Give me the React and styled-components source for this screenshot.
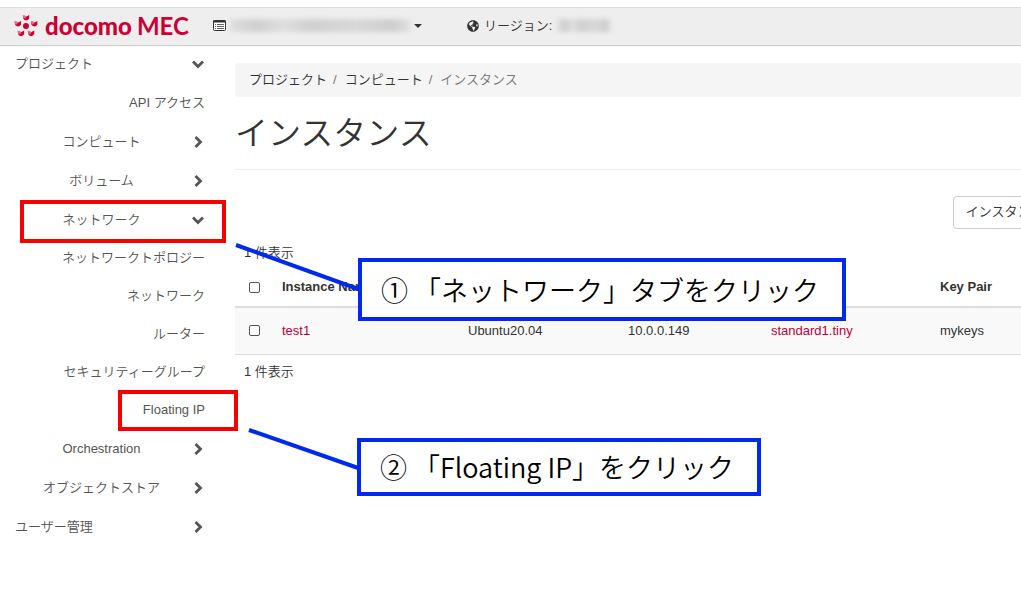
import React from 'react';
import styled, { createGlobalStyle } from 'styled-components';
import { FaGlobeAmericas } from 'react-icons/fa';

const menu = [
  { label: 'プロジェクト', kind: 'top', open: true },
  { label: 'API アクセス', kind: 'item', tall: true },
  { label: 'コンピュート', kind: 'group' },
  { label: 'ボリューム', kind: 'group' },
  { label: 'ネットワーク', kind: 'group', open: true, marked: true },
  { label: 'ネットワークトポロジー', kind: 'item' },
  { label: 'ネットワーク', kind: 'item' },
  { label: 'ルーター', kind: 'item' },
  { label: 'セキュリティーグループ', kind: 'item' },
  { label: 'Floating IP', kind: 'item', marked: true },
  { label: 'Orchestration', kind: 'group' },
  { label: 'オブジェクトストア', kind: 'group' },
  { label: 'ユーザー管理', kind: 'top' },
];

const instances = [
  {
    name: 'test1',
    image: 'Ubuntu20.04',
    ip: '10.0.0.149',
    flavor: 'standard1.tiny',
    keyPair: 'mykeys',
  },
];

const Chevron = ({ open }) => (
  <svg width="14" height="14" viewBox="0 0 14 14" aria-hidden="true">
    <path
      d={open ? 'M2 4.5 7 9.5 12 4.5' : 'M4.5 2 9.5 7 4.5 12'}
      fill="none"
      stroke="#555"
      strokeWidth="2.8"
    />
  </svg>
);

const LogoMark = () => (
  <svg width="24" height="24" viewBox="-12 -12 24 24" aria-hidden="true">
    <circle r="3" fill="#cc0033" />
    {[0, 72, 144, 216, 288].map((angle) => (
      <g
        key={angle}
        transform={`rotate(${angle}) translate(0 -8.6) rotate(${-angle})`}
      >
        <path d="M-3.2-2 0-.6 3.2-2.4V1.4Q1.8 3 0 3.2-2 2.8-2.8 1.2Z" fill="#cc0033" />
        <path d="M-3.2-2-1.4-2.2.2-.8-.6 1.2-2.6.8Z" fill="#e56a88" />
      </g>
    ))}
  </svg>
);

const ListIcon = () => (
  <svg width="13" height="11" viewBox="0 0 13 11" aria-hidden="true">
    <rect x=".5" y=".5" width="12" height="10" rx="1" fill="#fff" stroke="#333" />
    <path d="M0 1.5h13" stroke="#333" strokeWidth="2" />
    <path d="M2 4.5h1M2 6.5h1M2 8.5h1M4 4.5h7M4 6.5h7M4 8.5h7" stroke="#666" />
  </svg>
);

export default function App() {
  return (
    <>
      <GlobalStyle />
      <Header>
        <Brand href="#">
          <LogoMark />
          <Docomo>docomo</Docomo>
          <Mec>MEC</Mec>
        </Brand>
        <Picker type="button" aria-label="プロジェクト">
          <ListIcon />
          <Redacted $width={180} />
          <Caret />
        </Picker>
        <Region>
          <FaGlobeAmericas size={12} />
          リージョン:
          <Redacted $width={54} />
        </Region>
      </Header>
      <Page>
        <Sidebar>
          {menu.map((entry, index) =>
            entry.kind === 'item' ? (
              <MenuLink href="#" key={index} $tall={entry.tall}>
                {entry.label}
                {entry.marked && <LinkMark />}
              </MenuLink>
            ) : (
              <MenuButton
                type="button"
                key={index}
                aria-expanded={!!entry.open}
                $top={entry.kind === 'top'}
              >
                <span>{entry.label}</span>
                <Chevron open={entry.open} />
                {entry.marked && <GroupMark />}
              </MenuButton>
            )
          )}
        </Sidebar>
        <Main>
          <Breadcrumb>
            <a href="#">プロジェクト</a>
            <i>/</i>
            <a href="#">コンピュート</a>
            <i>/</i>
            <span>インスタンス</span>
          </Breadcrumb>
          <Title>インスタンス</Title>
          <Toolbar>
            <FilterButton type="button">インスタンス ID =</FilterButton>
          </Toolbar>
          <Count>1 件表示</Count>
          <Table>
            <colgroup>
              <Col $width={39} />
              <Col $width={186} />
              <Col $width={160} />
              <Col $width={143} />
              <Col $width={169} />
              <Col $width={200} />
            </colgroup>
            <thead>
              <tr>
                <Th>
                  <Check type="checkbox" aria-label="すべて選択" />
                </Th>
                <Th>Instance Name</Th>
                <Th aria-label="Image Name" />
                <Th aria-label="IP Address" />
                <Th aria-label="Flavor" />
                <Th>Key Pair</Th>
              </tr>
            </thead>
            <tbody>
              {instances.map((instance) => (
                <tr key={instance.name}>
                  <Td>
                    <Check type="checkbox" aria-label={instance.name} />
                  </Td>
                  <Td>
                    <CellLink href="#">{instance.name}</CellLink>
                  </Td>
                  <Td>{instance.image}</Td>
                  <Td>{instance.ip}</Td>
                  <Td>
                    <CellLink href="#">{instance.flavor}</CellLink>
                  </Td>
                  <Td>{instance.keyPair}</Td>
                </tr>
              ))}
            </tbody>
          </Table>
          <Count>1 件表示</Count>
        </Main>
      </Page>
      <Pointers width="130" height="230" viewBox="0 0 130 230" aria-hidden="true">
        <path d="M1 4 126 49M14 189 126 228" stroke="#0029f0" strokeWidth="4" />
      </Pointers>
      <Callout $left={358} $top={258} $width={488} $height={63}>
        ① 「ネットワーク」タブをクリック
      </Callout>
      <Callout $left={357} $top={438} $width={404} $height={58}>
        ② 「Floating IP」をクリック
      </Callout>
    </>
  );
}

const GlobalStyle = createGlobalStyle`
  * {
    box-sizing: border-box;
  }

  body {
    margin: 0;
    padding-top: 7px;
    overflow: hidden;
    background: #fff;
    color: #333;
    font-family: 'Liberation Sans', 'Noto Sans CJK JP', sans-serif;
    font-size: 13px;
    font-weight: 350;
    line-height: 18px;
  }

  a {
    color: inherit;
    text-decoration: none;
  }

  button {
    font: inherit;
    color: inherit;
  }
`;

const Header = styled.header`
  display: flex;
  align-items: center;
  height: 39px;
  padding: 0 0 2px 14px;
  background: #eee;
  border-top: 1px solid #ddd;
  border-bottom: 1px solid #ccc;
`;

const Brand = styled.a`
  display: flex;
  align-items: center;
  width: 199px;
  color: #cc0033;
  font-family: Lato, sans-serif;
  font-size: 24px;
  line-height: 32px;
`;

const Docomo = styled.span`
  margin-left: 7px;
  font-weight: 900;
`;

const Mec = styled.span`
  margin-left: 5px;
  font-weight: 700;
`;

const Picker = styled.button`
  display: flex;
  align-items: center;
  gap: 4px;
  width: 254px;
  padding: 0;
  border: 0;
  background: none;
`;

const Redacted = styled.span`
  width: ${(props) => props.$width}px;
  height: 13px;
  background: linear-gradient(90deg, #dedede, #d0d0d0 15%, #dedede 30%, #d0d0d0 45%, #d8d8d8 70%, #cecece 90%, #e0e0e0);
  filter: blur(2px);
`;

const Caret = styled.span`
  border: 4px solid transparent;
  border-top-color: #333;
  border-bottom: 0;
`;

const Region = styled.div`
  display: flex;
  align-items: center;
  gap: 5px;
`;

const Page = styled.div`
  display: flex;
`;

const Sidebar = styled.nav`
  display: flex;
  flex-direction: column;
  flex: 0 0 220px;
  margin-top: -2px;
  padding: 0 15px;
  color: #555;
`;

const MenuButton = styled.button`
  position: relative;
  display: flex;
  align-items: center;
  height: 39px;
  padding: 0;
  border: 0;
  background: none;

  span {
    flex: 1;
    text-align: ${(props) => (props.$top ? 'left' : 'center')};
  }

  svg {
    margin-left: 3px;
  }
`;

const MenuLink = styled.a`
  position: relative;
  display: flex;
  align-items: center;
  justify-content: flex-end;
  height: ${(props) => (props.$tall ? 39 : 38)}px;
`;

const GroupMark = styled.span`
  position: absolute;
  inset: 0 -21px -4px 5px;
  border: 4px solid #f80000;
`;

const LinkMark = styled.span`
  position: absolute;
  inset: -1px -33px -2px 103px;
  border: 4px solid #f80000;
`;

const Main = styled.main`
  flex: 1;
  min-width: 0;
  padding: 17px 0 0 15px;
  overflow: hidden;
`;

const Breadcrumb = styled.nav`
  display: flex;
  height: 34px;
  padding: 8px 14px;
  border-radius: 4px 0 0 4px;
  background: #f5f5f5;
  color: #777;

  a {
    color: #333;
  }

  i {
    padding: 0 8px 0 6px;
    font-style: normal;
  }
`;

const Title = styled.h1`
  margin: 0 0 26px;
  padding: 13px 0 11px;
  border-bottom: 1px solid #eee;
  font-size: 33px;
  font-weight: 350;
  line-height: 48px;
`;

const Toolbar = styled.div`
  display: flex;
  justify-content: flex-end;
  margin-right: -63px;
`;

const FilterButton = styled.button`
  flex: none;
  height: 33px;
  padding: 0 12px 2px;
  border: 1px solid #ccc;
  border-radius: 4px;
  background: #fff;
`;

const Count = styled.div`
  padding: 8px 9px;
  line-height: 18px;

  ${Toolbar} + & {
    padding: 15px 9px 6px;
  }
`;

const Table = styled.table`
  width: 897px;
  table-layout: fixed;
  border-collapse: collapse;
`;

const Col = styled.col`
  width: ${(props) => props.$width}px;
`;

const Th = styled.th`
  height: 39px;
  padding: 0 8px;
  border-bottom: 2px solid #ddd;
  text-align: left;

  &:first-child {
    padding-left: 14px;
  }
`;

const Td = styled.td`
  height: 47px;
  padding: 0 8px;
  border-bottom: 1px solid #ddd;
  background: #f9f9f9;

  &:first-child {
    padding-left: 14px;
  }
`;

const Check = styled.input`
  display: block;
  appearance: none;
  width: 11px;
  height: 11px;
  margin: 0;
  border: 1px solid #555;
  border-radius: 2px;
  background: #fff;
`;

const CellLink = styled.a`
  color: #b8003c;
`;

/* guide annotations drawn over the screen */
const Pointers = styled.svg`
  position: absolute;
  left: 235px;
  top: 241px;
`;

const Callout = styled.div`
  position: absolute;
  left: ${(props) => props.$left}px;
  top: ${(props) => props.$top}px;
  display: flex;
  align-items: center;
  width: ${(props) => props.$width}px;
  height: ${(props) => props.$height}px;
  padding-left: 19px;
  border: 4px solid #0029f0;
  background: #fff;
  color: #000;
  font-family: 'Noto Sans CJK JP', sans-serif;
  font-size: 27px;
  line-height: 40px;
  white-space: nowrap;
`;
